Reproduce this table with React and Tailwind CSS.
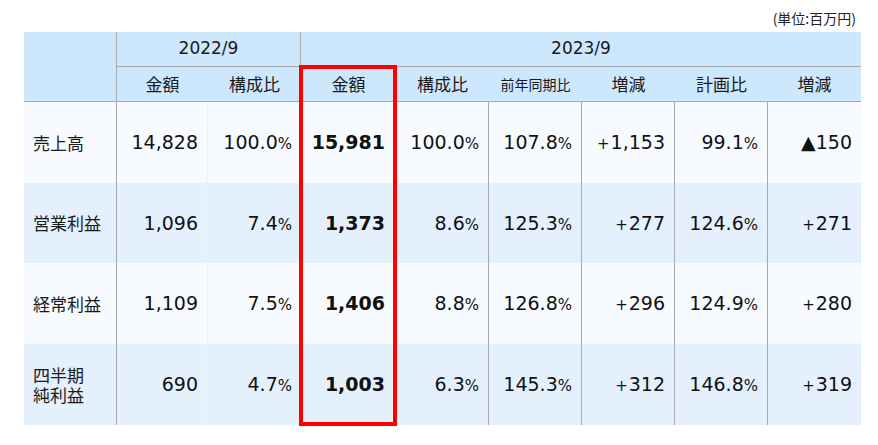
const jp = { fontFamily: '"Noto Sans CJK JP", "Noto Sans", sans-serif' }
const num = { fontFamily: '"DejaVu Sans", "Noto Sans CJK JP", sans-serif' }

const rows = [
  { label: ['売上高'], a: '14,828', b: '100.0', c: '15,981', d: '100.0', e: '107.8', f: '1,153', g: '99.1', h: '▲150', bg: 'bg-[#f7fbff]' },
  { label: ['営業利益'], a: '1,096', b: '7.4', c: '1,373', d: '8.6', e: '125.3', f: '277', g: '124.6', h: '+271', bg: 'bg-[#e4f0fc]' },
  { label: ['経常利益'], a: '1,109', b: '7.5', c: '1,406', d: '8.8', e: '126.8', f: '296', g: '124.9', h: '+280', bg: 'bg-[#f7fbff]' },
  { label: ['四半期', '純利益'], a: '690', b: '4.7', c: '1,003', d: '6.3', e: '145.3', f: '312', g: '146.8', h: '+319', bg: 'bg-[#e4f0fc]' },
]

function Pct({ v }) {
  return (
    <span style={num} className="text-[19px]">
      {v}
      <span className="text-[15px]">%</span>
    </span>
  )
}

function Signed({ v }) {
  if (v.startsWith('▲')) {
    return <span style={num} className="text-[19px]">{v}</span>
  }
  const s = v.replace('+', '')
  return (
    <span style={num} className="text-[19px]">
      <span className="text-[15px] mr-[1px]">+</span>
      {s}
    </span>
  )
}

function Cell({ children, className = '' }) {
  return (
    <div className={`flex items-center justify-end pr-[9px] text-[#111] ${className}`}>
      {children}
    </div>
  )
}

export default function App() {
  const head = 'bg-[#cde7fc] flex items-center justify-center text-[#1a1a1a] border-b border-[#a9a9a9]'
  return (
    <div className="w-[878px] h-[445px] bg-white pl-[24px]">
      <div className="w-[837px] h-[32px] flex items-end justify-end pr-[5px] pb-[6px]">
        <span style={jp} className="text-[14px] leading-[16px] text-[#222]">(単位:百万円)</span>
      </div>
      <div className="relative w-[837px]">
        <div className="grid grid-cols-[93px_91px_93px_95px_93px_93px_93px_93px_93px] grid-rows-[35px_35px_81px_80px_81px_81px]">
          <div className={`${head} row-span-2 border-r`}></div>
          <div style={num} className={`${head} col-span-2 border-r text-[17px]`}>2022/9</div>
          <div style={num} className={`${head} col-span-6 text-[17px]`}>2023/9</div>

          <div style={jp} className={`${head} text-[17px]`}>金額</div>
          <div style={jp} className={`${head} text-[17px]`}>構成比</div>
          <div style={jp} className={`${head} text-[17px]`}>金額</div>
          <div style={jp} className={`${head} text-[17px]`}>構成比</div>
          <div style={jp} className={`${head} text-[14px]`}>前年同期比</div>
          <div style={jp} className={`${head} text-[17px]`}>増減</div>
          <div style={jp} className={`${head} text-[17px]`}>計画比</div>
          <div style={jp} className={`${head} text-[17px]`}>増減</div>

          {rows.map((r, i) => (
            <div key={i} className="contents">
              <div style={jp} className={`${r.bg} flex items-center pl-[9px] text-[17px] leading-[20px] text-[#1a1a1a] border-r border-[#a9a9a9]`}>
                <span>
                  {r.label[0]}
                  {r.label[1] && <br />}
                  {r.label[1]}
                </span>
              </div>
              <Cell className={`${r.bg} border-r border-[#edf3fa]`}>
                <span style={num} className="text-[19px]">{r.a}</span>
              </Cell>
              <Cell className={r.bg}><Pct v={r.b} /></Cell>
              <Cell className={`${r.bg} pr-[11px]`}>
                <span style={num} className="text-[19px] font-bold">{r.c}</span>
              </Cell>
              <Cell className={`${r.bg} border-r border-[#a9a9a9]`}><Pct v={r.d} /></Cell>
              <Cell className={`${r.bg} border-r border-[#a9a9a9]`}><Pct v={r.e} /></Cell>
              <Cell className={`${r.bg} border-r border-[#a9a9a9]`}><Signed v={'+' + r.f} /></Cell>
              <Cell className={`${r.bg} border-r border-[#a9a9a9]`}><Pct v={r.g} /></Cell>
              <Cell className={r.bg}><Signed v={r.h} /></Cell>
            </div>
          ))}
        </div>
        <div className="absolute left-[275px] top-[33px] w-[98px] h-[361px] border-4 border-[#ff0000] pointer-events-none"></div>
      </div>
    </div>
  )
}
